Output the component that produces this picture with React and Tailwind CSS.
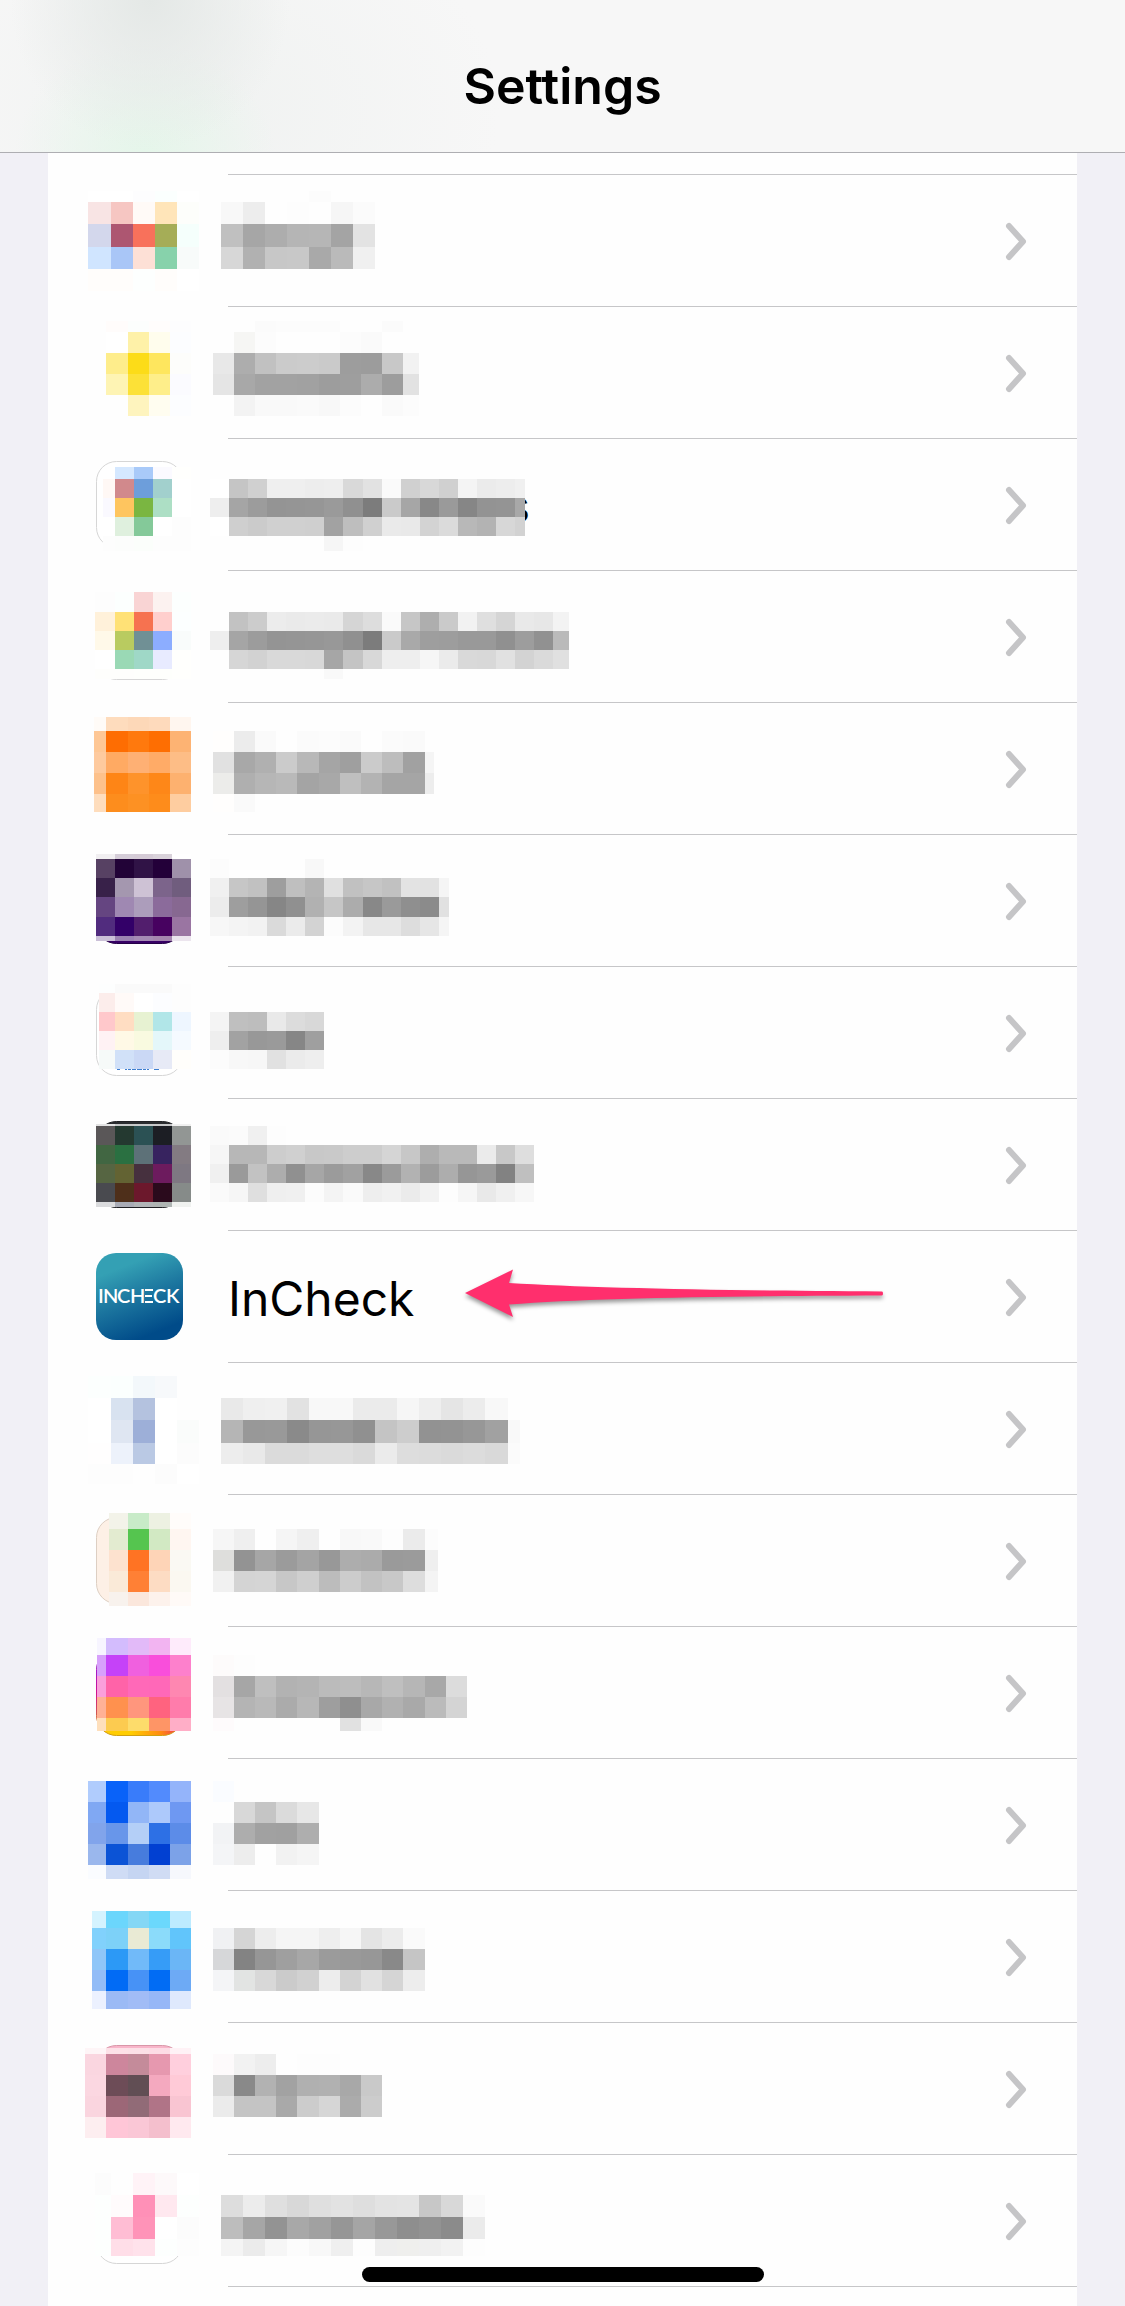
import React from "react";

// Column edges shared by the mosaics: coarse, medium and fine cells.
const ICON_L = [8, 31, 53, 75, 97, 119];
const ICON_M = [8, 26, 48, 69, 90, 111];
const ICON_S = [16, 35, 54, 73, 92, 111];
const TEXT_L = [13, 35, 57, 79, 101, 123, 145, 167, 189, 211, 233, 255, 277, 300, 312];
const TEXT_M = [5, 26, 47, 68, 89, 111, 132, 153, 174, 195, 217, 238, 259];
const TEXT_S = [2, 21, 40, 59, 78, 97, 116, 135, 155, 174, 193, 212, 231, 250, 269, 288, 307, 326, 345, 361];

const withStart = (first, edges) => [first, ...edges.slice(1)];
const withEnd = (edges, count, last) => [...edges.slice(0, count), last];

const OUTLINE = { fill: "#ffffff", stroke: "#d6d6d6" };

const rows = [
  {
    icon: {
      x: ICON_L,
      y: [16, 27, 49, 72, 94, 116],
      c: [
        "ffffff ffffff fdfdfe fbfffe ffffff",
        "f8e4e4 f6c6c2 fffaf7 ffe5b9 fdfefb",
        "d3d7ec ad5671 f8715b a5ad57 f5fffc",
        "d0e5ff a9c6f7 fde0d6 87d2ab f8fbfa",
        "fffdfb fffdfb fdfffe fffdfb ffffff",
      ],
    },
    text: {
      x: TEXT_L,
      y: [16, 27, 49, 72, 94],
      c: [
        ". . . . fcfcfc . .",
        "f8f8f8 ededed . fdfdfd . f6f6f6 fbfbfb",
        "c0c0c0 a6a6a6 adadad b5b5b5 b6b6b6 a4a4a4 e3e3e3",
        "d7d7d7 b1b1b1 c7c7c7 c8c8c8 a9a9a9 bababa f0f0f0",
      ],
    },
  },
  {
    icon: {
      x: ICON_M,
      y: [14, 25, 46, 67, 88, 109],
      c: [
        "fefefe fffcfb fcfefd fffdfc fdfdfe",
        "fefefe ffffff fef1a8 fffded fcfdff",
        "fefefe feed8b fcdc18 fee65e fdfdfb",
        "fefefe fef4b4 fce137 feee8a fbfbff",
        "fefefe fefefe fef4be fffdf0 fcfdff",
      ],
    },
    text: {
      x: withEnd(TEXT_M, 10, 211),
      y: [14, 25, 46, 67, 88, 109],
      c: [
        ". . fbfbfb fcfcfc fcfcfc fcfcfc . . fbfbfb .",
        ". f6f6f4 fcfcfc . . . fcfcfc fafafa . .",
        "e8e8e8 adadad c1c1c1 cbcbcb cccccc cacaca 9d9d9d 9c9c9c c8c8c8 f2f2f2",
        "e5e5e5 a8a8a8 a2a2a2 a2a2a2 a1a1a1 9d9d9d 9e9e9e acacac 9d9d9d e2e2e2",
        ". f3f3f3 f9f9f9 f9f9f9 fafafa f8f8f8 fcfcfc . fafafa fcfcfc",
      ],
    },
  },
  {
    icon: {
      frame: OUTLINE,
      x: [23, 35, 54, 73, 92, 111],
      y: [28, 40, 59, 78, 97, 112],
      c: [
        "ffffff d5e8ff a9caf9 fbfaff fffffd",
        "fff8f5 d1898c 6d9edb a2d0cd ffffff",
        "faf9ff fec55f 7ab641 addfc5 ffffff",
        "ffffff dff0de 84c999 ffffff fdfdfd",
        "fdfdfd fcfdfc fbfefb fdfdfd fdfdfd",
      ],
    },
    text: {
      tail: "s",
      x: withEnd(TEXT_S, 17, 317),
      y: [40, 59, 78, 97, 112],
      c: [
        "ffffff c5c5c5 d0d0d0 efefef efefef ededed eeeeee d9d9d9 e2e2e2 fafafa d0d0d0 d8d8d8 d0d0d0 f4f4f4 ebebeb ededed f0f0f0",
        "eeeeee a5a5a5 9c9c9c 949494 959595 969696 9a9a9a 909090 7c7c7c cacaca a6a6a6 888888 9a9a9a 868686 939393 949494 a8a8a8",
        "ffffff cfcfcf cbcbcb d0d0d0 d0d0d0 cfcfcf a2a2a2 bebebe d0d0d0 eaeaea e9e9e9 d3d3d3 dbdbdb b8b8b8 b3b3b3 d7d7d7 d2d2d2",
        ". . . . . . f6f6f6 fdfdfd . . . . . . . . .",
      ],
    },
  },
  {
    icon: {
      frame: OUTLINE,
      x: withStart(15, ICON_S),
      y: [21, 41, 60, 79, 98, 108],
      c: [
        "fdfdfd fcfffe f9d4d4 fcf2f0 fcfffe",
        "fff1da ffe176 f67250 ffcfcd fcffff",
        "fff9e9 b9cb60 709095 8cadff f9fcfb",
        "ffffff 9ad9b5 9fd8c7 e8ebff fffffd",
        "fefefc fefefc fefffc fefffc fffffd",
      ],
    },
    text: {
      x: TEXT_S,
      y: [41, 60, 79, 98, 108],
      c: [
        ". c2c2c2 cccccc ececec eaeaea ebebeb eaeaea d5d5d5 dddddd fafafa c6c6c6 aeaeae cacaca f2f2f2 dfdfdf d5d5d5 e9e9e9 e7e7e7 f3f3f3",
        "eeeeee a5a5a5 9c9c9c 949494 959595 969696 989898 909090 7c7c7c cacaca a9a9a9 9e9e9e 9d9d9d 999999 999999 909090 9d9d9d 919191 bababa",
        ". d6d6d6 d2d2d2 d9d9d9 d9d9d9 d8d8d8 a6a6a6 c4c4c4 d8d8d8 eeeeee eeeeee f6f6f6 ebebeb d9d9d9 d8d8d8 e1e1e1 d3d3d3 dadada e0e0e0",
        ". . . . . . f9f9f9 fefefe . . . . . . . . . . .",
      ],
    },
  },
  {
    icon: {
      x: withStart(14, ICON_M),
      y: [14, 28, 49, 70, 91, 109],
      c: [
        "fffbf7 fedcbd fdd8b8 fedabc fff6ef",
        "fec795 fe6d02 ff790d fe6e02 fdb373",
        "feca9e ffaa63 feb074 ffab67 fdbd86",
        "fdc18b fe8516 fe932b fe8718 fdb16f",
        "feddbd fd8d1d fd9123 fe8c1b fecda0",
      ],
    },
    text: {
      x: withEnd(TEXT_M, 11, 226),
      y: [28, 49, 70, 91, 109],
      c: [
        "fffefd ececec fafafa . fbfbfb fcfcfc fafafa . fbfbfb fafafa .",
        "e1e1e1 a8a8a8 b0b0b0 cbcbcb b8b8b8 a5a5a5 9f9f9f cbcbcb bdbdbd a1a1a1 f5f5f5",
        "ececea afafaf b6b6b6 b9b9b9 a4a4a4 a8a8a8 bfbfbf b3b3b3 a5a5a5 a5a5a5 ededed",
        "fffefd fafafa . . . fefefe . . . . .",
      ],
    },
  },
  {
    icon: {
      frame: { fill: "#380066", stroke: "#250047" },
      x: withStart(16, ICON_S),
      y: [19, 24, 43, 62, 82, 101, 106],
      c: [
        "f1eff1 d5cdd8 d5cbd6 d9d2da ffffff",
        "574163 220337 301346 230039 9f91aa",
        "382149 a497af cec2d5 7c648b 705d7e",
        "654581 9f88b2 ac9dbb 8b6b9b 876891",
        "512c7e 330068 521e6d 470260 9a75a2",
        "cbc0d8 9b82b2 a58ab4 a585af ece5ee",
      ],
    },
    text: {
      x: withEnd(TEXT_S, 13, 241),
      y: [24, 43, 62, 82, 101],
      c: [
        "fcfcfc . . fefefe . f8f8f8 . . . . . . .",
        "f0f0f0 c6c6c6 c1c1c1 9e9e9e bfbfbf b4b4b4 e0e0e0 c1c1c1 c6c6c6 c1c1c1 e3e3e3 e2e2e2 f5f5f5",
        "ececec 9e9e9e 959595 868686 909090 b1b1b1 c6c6c6 acacac 888888 9a9a9a 8f8f8f 8b8b8b e1e1e1",
        "f7f7f7 f4f4f4 f2f2f2 dadada ebebeb d3d3d3 fcfcfc f3f3f3 e7e7e7 e7e7e7 dddddd e6e6e6 f5f5f5",
      ],
    },
  },
  {
    icon: {
      frame: OUTLINE,
      dashes: true,
      x: withStart(19, ICON_S),
      y: [17, 26, 45, 64, 83, 102],
      c: [
        "fdfefe fafafa fafafa fafafa fdfdfd",
        "fcedeb fffaf8 ffffff fcfdff fdfdfd",
        "ffc8cb ffddc2 e7f2d2 b1e6e8 eef6ff",
        "fff2f4 fff9e6 f9fae0 e4f7fa f5faff",
        "f6faf9 d1e1f8 cad8f5 e7eaf6 fffefb",
      ],
    },
    text: {
      x: TEXT_S,
      y: [45, 64, 83, 102],
      c: [
        "f4f4f4 bfbfbf bdbdbd e9e9e9 dcdcdc d8d8d8",
        "eeeeee a2a2a2 989898 9a9a9a 868686 9f9f9f",
        "fcfcfc f8f8f8 f7f7f7 e1e1e1 ebebeb eeeeee",
      ],
    },
  },
  {
    icon: {
      frame: { fill: "#2b2d30", stroke: "#202124" },
      x: withStart(16, ICON_S),
      y: [25, 27, 46, 65, 84, 103, 108],
      c: [
        "e3e3e3 c7c9c9 c8cacb c8c9ca f0f0f0",
        "5a5758 243930 2b5154 1c1e24 929694",
        "416642 2a7041 5d7178 37235f 837b82",
        "566542 636333 46303e 6d1b5e 7e7882",
        "494a4f 4e2f1a 6c182c 2a0a1c 868b89",
        "dadbdd a9acb6 b1b5b7 afb5b3 f0f2f0",
      ],
    },
    text: {
      x: TEXT_S,
      y: [27, 46, 65, 84, 103],
      c: [
        "fafafa fbfbfb f0f0f0 fdfdfd . . . . . . . . . . . . .",
        "f6f6f6 b7b7b7 b7b7b7 cdcdcd d0d0d0 c8c8c8 c9c9c9 cdcdcd cdcdcd d5d5d5 c7c7c7 aeaeae b9b9b9 b9b9b9 ebebeb c8c8c8 dedede",
        "f0f0f0 9a9a9a c2c2c2 adadad 909090 a6a6a6 9b9b9b a1a1a1 888888 9b9b9b b2b2b2 9c9c9c adadad 969696 9a9a9a 828282 bfbfbf",
        "fafafa f6f6f6 dfdfdf efefef f0f0f0 fcfcfc f4f4f4 fafafa eeeeee f1f1f1 ebebeb f2f2f2 fdfdfd f6f6f6 e9e9e9 f0f0f0 f7f7f7",
      ],
    },
  },
  { app: "InCheck" },
  {
    icon: {
      x: ICON_L,
      y: [13, 35, 57, 80, 101, 121],
      c: [
        "fcfffe fbfffe f3f8fb f7f9fb fefefe",
        "ffffff d8e2f0 b4c2df ffffff fefefe",
        "ffffff dfe6f2 9dafd8 ffffff fafcfb",
        "fffefe edf2fb bac9e4 ffffff fcfcfc",
        "fdfdfd fdfdfd fefefe fcfcfc ffffff",
      ],
    },
    text: {
      x: TEXT_L,
      y: [35, 57, 80, 101],
      c: [
        "e9e9e9 efefef f0f0f0 e2e2e2 f8f8f8 f8f8f8 ebebeb ebebeb f6f6f6 eeeeee e5e5e5 ececec f8f8f8 fefefe",
        "b5b5b5 989898 999999 8a8a8a 969696 979797 909090 c4c4c4 cdcdcd 929292 939393 979797 a1a1a1 f9f9f9",
        "ededed e9e9e9 dbdbdb dbdbdb dedede dedede dadada ebebeb dddddd dcdcdc dadada dcdcdc d9d9d9 fbfbfb",
      ],
    },
  },
  {
    icon: {
      frame: { fill: "#fdf0e6", stroke: "#ddcfc3" },
      x: [29, 48, 69, 90, 111],
      y: [18, 34, 55, 76, 97, 111],
      c: [
        "f3f3e9 c8ebc8 edf1e2 fffcfa",
        "e3ebd0 55c54f d2e9c3 fff6f1",
        "fde2cf ff7323 fed4b7 faf9f3",
        "faead8 ff8035 fddcc3 fbf8f1",
        "f8f2ed fbe7dc fdf2ec fffaf7",
      ],
    },
    text: {
      x: withEnd(TEXT_M, 11, 230),
      y: [34, 55, 76, 97],
      c: [
        "f6f6f6 efefef . f5f5f5 efefef . f8f8f8 f9f9f9 fdfdfd ebebeb fcfcfc",
        "dededc 939393 a6a6a6 9b9b9b a4a4a4 989898 adadad ababab 9a9a9a 9b9b9b efefef",
        "f1f1f1 d4d4d4 d5d5d5 c7c7c7 cfcfcf bcbcbc cccccc c2c2c2 c8c8c8 dddddd f4f4f4",
      ],
    },
  },
  {
    icon: {
      frame: { fill: "url(#sunset)", stroke: "url(#dusk)" },
      x: withStart(17, ICON_M),
      y: [11, 28, 49, 70, 91, 104],
      c: [
        "f7f5ff d3bcfd e2baf8 f2b4f1 feebfb",
        "d7a0fb c542f8 f060df f94edb fd80cc",
        "fa9fdb ff63a8 ff69b8 ff68b8 fe87b1",
        "ffb196 ff914e ff967d ff637f ff7cab",
        "fedfbc fccb50 fddc6b fe9566 ffaec7",
      ],
    },
    text: {
      x: TEXT_M,
      y: [28, 49, 70, 91, 104],
      c: [
        "fdfbfb fdfdfd . . . . . . . . . .",
        "e3e0e1 a6a6a6 bfbfbf b2b2b2 b4b4b4 bbbbbb bdbdbd b7b7b7 bfbfbf b6b6b6 a8a8a8 dcdcdc",
        "e7e4e5 b4b4b4 b9b9b9 ababab b7b7b7 9e9e9e 8f8f8f a8a8a8 b1b1b1 a9a9a9 bbbbbb d4d4d4",
        "fefbfc . . . . . e1e1e1 f9f9f9 . . . .",
      ],
    },
  },
  {
    icon: {
      x: ICON_M,
      y: [22, 43, 64, 85, 106, 120],
      c: [
        "b0ccfd 0962f9 397cfa 528bfd 94b4fa",
        "80a8f3 0459f0 92b6f7 adc9fb 6e98f2",
        "81a4eb 6896ea b4cff7 2d70e5 5c8ce8",
        "9ab7ed 0b53d6 477cdd 0140d2 7ca2e8",
        "fafcff cfdcf5 c5d5f2 d0dcf4 f6f8fd",
      ],
    },
    text: {
      x: TEXT_M,
      y: [22, 43, 64, 85, 106],
      c: [
        "fafcff . . . .",
        ". d8d8d8 c5c5c5 dbdbdb e7e7e7",
        "f2f3f5 adadad a1a1a1 a0a0a0 aeaeae",
        "f4f5f7 ededed . f2f2f2 f5f5f5",
      ],
    },
  },
  {
    icon: {
      x: withStart(12, ICON_M),
      y: [20, 37, 58, 79, 100, 118],
      c: [
        "d4f3ff 6bd6fc 84d7f5 6bd8fc bdebff",
        "81d1fc 7dd1f8 e9ead4 8bdbfa 61c5fb",
        "8fc6f8 2c99f6 71baf9 369cf7 6bb6f6",
        "92bcf7 016bf5 4792f6 016cf4 6daaf5",
        "ecf1ff 9bbaf5 a1bcf6 96b7f7 dfe9fd",
      ],
    },
    text: {
      x: TEXT_M,
      y: [37, 58, 79, 100],
      c: [
        "f0f1f3 d5d5d5 ededed f5f5f5 f5f5f5 eeeeee f6f6f6 e4e4e4 ececec fafafa",
        "d6d7d9 838383 969696 9f9f9f a7a7a7 9b9b9b 999999 979797 898989 c5c5c5",
        "f4f5f7 e2e4e3 d8d8d8 cbcbcb d1d1d1 ededed d3d3d3 e1e1e1 d5d5d5 ededed",
      ],
    },
  },
  {
    icon: {
      frame: { fill: "#f8b6ca", stroke: "#d996a8" },
      x: withStart(5, ICON_M),
      y: [25, 31, 52, 73, 94, 115],
      c: [
        "fef5f7 fde1e8 fce0e7 fddce6 fff2f6",
        "fad6e0 cd869c c48b9a e698af ffcfdd",
        "fbd7e1 6d4c57 614e54 f4a9bf ffcad7",
        "fad5df 9c6777 916b77 b07487 f9c5d2",
        "fdeef0 ffc6d7 fac7d6 f4bfcd ffe9ef",
      ],
    },
    text: {
      x: TEXT_M,
      y: [31, 52, 73, 94],
      c: [
        "fdfafb f2f2f2 ededed . fdfdfd fdfdfd . .",
        "dadada 898989 b2b2b2 a2a2a2 b0b0b0 b1b1b1 a8a8a8 c9c9c9",
        "ebebeb c4c4c4 c4c4c4 a9a9a9 cccccc d6d6d6 ababab cccccc",
      ],
    },
  },
  {
    icon: {
      frame: OUTLINE,
      x: [15, 31, 53, 75, 97, 119],
      y: [18, 40, 62, 84, 101],
      c: [
        "fcfcfc fefefe fff3f7 fdf9fa ffffff",
        "fdfffe fffbfc ff90b7 ffe8ef fdfffe",
        "fdfffe ffbdd4 ff93b8 ffffff fcfcfc",
        "fdfffe ffdee8 ffe2eb fdfffe fdfdfd",
      ],
    },
    text: {
      x: TEXT_L,
      y: [40, 62, 84, 101],
      c: [
        "dddddd ececec dfdfdf d8d8d8 dfdfdf e2e2e2 dedede e3e3e3 e4e4e4 c7c7c7 d8d8d8 fafafa",
        "bdbdbd a6a6a6 939393 a8a8a8 a1a1a1 969696 a5a5a5 989898 8e8e8e 929292 8b8b8b ebebeb",
        "f4f4f4 ebebeb f6f6f6 fcfcfc f8f8f8 efefef fdfdfd eeeeee efefed efefef f2f2f2 fdfdfd",
      ],
    },
  },
];

function Cells({ x, y, c }) {
  return c.flatMap((line, r) =>
    line.split(" ").map((color, i) =>
      color === "." ? null : (
        <rect
          key={`${r}-${i}`}
          x={x[i]}
          y={y[r]}
          width={x[i + 1] - x[i]}
          height={y[r + 1] - y[r]}
          fill={`#${color}`}
          shapeRendering="crispEdges"
        />
      )
    )
  );
}

function MosaicIcon({ icon }) {
  return (
    <svg className="h-[131px] w-32 shrink-0" viewBox="0 0 128 131" aria-hidden="true">
      <defs>
        <linearGradient id="sunset" x1="0" x2="1" y1="0" y2="0">
          <stop offset="0.4" stopColor="#ffcc00" />
          <stop offset="0.75" stopColor="#ff8a10" />
          <stop offset="1" stopColor="#f02060" />
        </linearGradient>
        <linearGradient id="dusk" x1="0" x2="0" y1="0" y2="1">
          <stop offset="0.1" stopColor="#8a20e8" />
          <stop offset="0.5" stopColor="#d01090" />
          <stop offset="1" stopColor="#d0a010" />
        </linearGradient>
      </defs>
      {icon.frame && (
        <rect x="16.5" y="22.5" width="86" height="86" rx="20" fill={icon.frame.fill} stroke={icon.frame.stroke} />
      )}
      <Cells {...icon} />
      {icon.dashes && (
        <path d="M37 102.5H81" stroke="#3f7fd0" strokeDasharray="3 5 2 1 3 1 4 1 5 1 3 1 2 5 5 9" />
      )}
    </svg>
  );
}

function MosaicLabel({ text }) {
  return (
    <svg className="h-[131px] w-96 shrink-0" viewBox="0 0 384 131" aria-hidden="true">
      {text.tail && (
        <text x="322" y="84" textAnchor="end" fontSize="48" fontFamily="Inter, sans-serif">
          {text.tail}
        </text>
      )}
      <Cells {...text} />
    </svg>
  );
}

function InCheckIcon() {
  return (
    <svg className="ml-4 mr-[25px] size-[87px] shrink-0" viewBox="0 0 87 87" aria-hidden="true">
      <defs>
        <linearGradient id="incheck" x1="0.3" x2="0.7" y1="0" y2="1">
          <stop offset="0.14" stopColor="#34a0b4" />
          <stop offset="0.5" stopColor="#1c769f" />
          <stop offset="0.92" stopColor="#004b89" />
        </linearGradient>
      </defs>
      <rect width="87" height="87" rx="20" fill="url(#incheck)" />
      <g fill="#ffffff" fontFamily="Lato, sans-serif" fontSize="20" fontWeight="600">
        <text x="2" y="50">I</text>
        <text x="7" y="50">N</text>
        <text x="21" y="50">C</text>
        <text x="34" y="50">H</text>
        <text x="57" y="50">C</text>
        <text x="70" y="50">K</text>
      </g>
      <path d="M49 37H57M49 43H56M49 49H57" stroke="#ffffff" strokeWidth="2" />
    </svg>
  );
}

function Chevron() {
  return (
    <svg className="ml-auto h-10 w-6 shrink-0" viewBox="0 0 24 40" fill="none" aria-hidden="true">
      <path d="M4 5L18 20.500L4 36" stroke="#c5c5c7" strokeWidth="6" strokeLinecap="round" strokeLinejoin="round" />
    </svg>
  );
}

function Arrow() {
  return (
    <svg
      className="pointer-events-none absolute left-[412px] top-7 h-20 w-[430px] drop-shadow-[0_3px_2px_rgba(0,0,0,0.4)]"
      viewBox="0 0 430 80"
      aria-hidden="true"
    >
      <path d="M5 34L53 10.500L49 24C130 29 260 31.500 422 32.500Q423 32.500 423 34.500Q423 36.500 422 36.500C260 37 130 39 49 45.500L53 58Z" fill="#ff2f6d" />
    </svg>
  );
}

export default function App() {
  return (
    <div className="flex min-h-screen flex-col bg-[#f1f0f6] font-[Inter,sans-serif] text-black">
      <header className="flex h-[153px] items-end justify-center border-b border-[#aeaeb2] bg-[#f7f7f7] bg-[radial-gradient(ellipse_140px_150px_at_150px_0px,#e4e8e6,transparent),radial-gradient(ellipse_130px_110px_at_145px_153px,#e5f6ea,transparent),radial-gradient(ellipse_300px_220px_at_200px_110px,#f0f2f1,transparent)] pb-9">
        <h1 className="text-[50px] font-semibold leading-[60px]">Settings</h1>
      </header>
      <main className="mx-12 flex-1 bg-[#fefefe]">
        <div className="ml-[180px] mt-[21px] h-px bg-[#c6c6c8]" />
        <ul>
          {rows.map((row, i) => (
            <li key={i} className="relative">
              <button
                type="button"
                aria-label={row.app ?? "Hidden app"}
                className="flex h-[131px] w-full items-center pl-8 pr-12 text-left"
              >
                {row.app ? (
                  <>
                    <InCheckIcon />
                    <span className="pl-5 pt-1 text-[48px] leading-[60px]">{row.app}</span>
                  </>
                ) : (
                  <>
                    <MosaicIcon icon={row.icon} />
                    <MosaicLabel text={row.text} />
                  </>
                )}
                <Chevron />
              </button>
              {row.app && <Arrow />}
              <div className="ml-[180px] h-px bg-[#c6c6c8]" />
            </li>
          ))}
        </ul>
      </main>
      <div className="fixed bottom-6 left-1/2 h-[15px] w-[402px] -translate-x-1/2 rounded-full bg-black" />
    </div>
  );
}
